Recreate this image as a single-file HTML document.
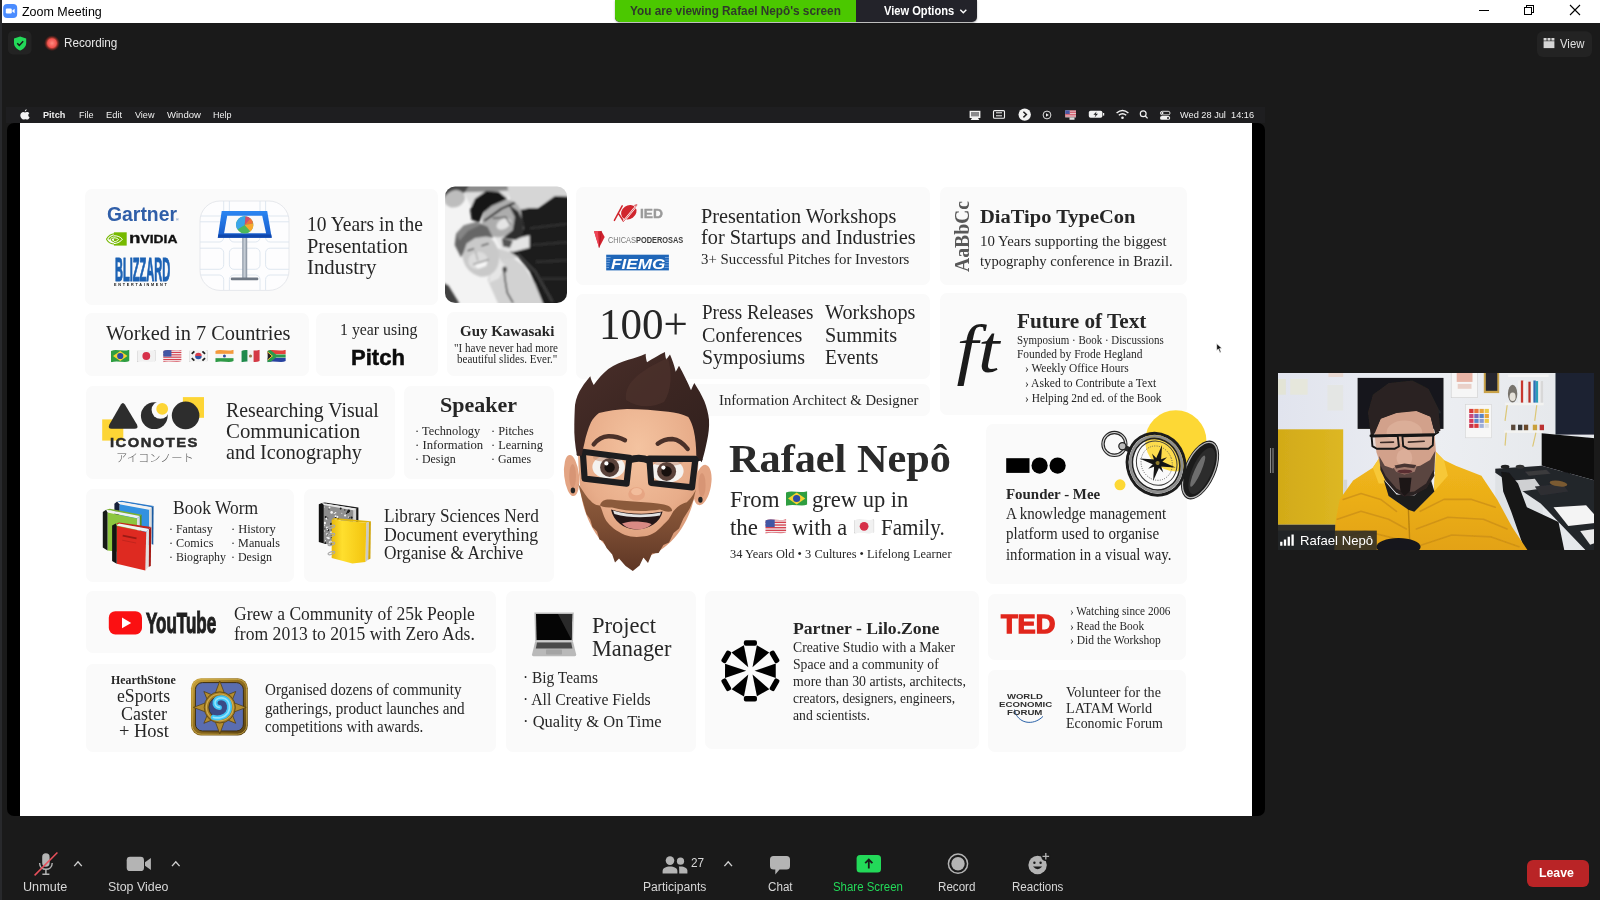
<!DOCTYPE html>
<html lang="en"><head><meta charset="utf-8"><title>Zoom Meeting</title>
<style>
*{margin:0;padding:0;box-sizing:border-box}
html,body{width:1600px;height:900px;overflow:hidden;background:#1a1a1a}
body{position:relative;font-family:"Liberation Sans",sans-serif;color:#fff}
.abs,.t,.card,svg.a{position:absolute}
.t{white-space:pre;line-height:1;transform-origin:0 50%;color:#262626}
.se{font-family:"Liberation Serif",serif}
.sa{font-family:"Liberation Sans",sans-serif}
.jp{font-family:"Liberation Sans","Noto Sans CJK JP",sans-serif}
.card{background:#fafafa;border-radius:7px}
#titlebar{left:2px;top:0;width:1598px;height:23px;background:#fff}
#banner{left:615px;top:0;width:362px;height:22px;border-radius:0 0 5px 5px;overflow:hidden;background:#23232a;box-shadow:0 1px 2px rgba(0,0,0,.35)}
#banner .g{position:absolute;left:0;top:0;width:241px;height:22px;background:#4bc800}
#share{left:7px;top:123px;width:1258px;height:693px;background:#000;border-radius:7px}
#menubar{left:6px;top:107px;width:1259px;height:16px;background:#1e1e20}
#sc{left:0;top:0;width:1600px;height:900px;filter:blur(.4px)}
#slide{left:20px;top:123px;width:1232px;height:693px;background:#fff}
#video{left:1278px;top:373px;width:316px;height:177px;overflow:hidden;background:#dfe2e4}
.btn{background:#232323;border-radius:6px}
#leave{left:1527px;top:860px;width:61.5px;height:26.8px;background:#b92426;border-radius:6px}
#edge{left:0;top:0;width:2px;height:900px;background:#28292c}
</style></head>
<body>
<div class="abs" id="edge"></div>
<div class="abs" id="titlebar"></div>
<div class="abs" id="banner"><div class="g"></div></div>
<div class="abs" id="menubar"></div>
<div class="abs" id="share"></div>
<div class="abs" id="slide"></div>
<div class="abs" id="sc">
<div class="card" style="left:85px;top:189px;width:353.0px;height:116.0px"></div>
<div class="card" style="left:575.5px;top:187px;width:354.5px;height:97.5px"></div>
<div class="card" style="left:940px;top:186.7px;width:246.5px;height:98.6px"></div>
<div class="card" style="left:85px;top:312.5px;width:224.0px;height:63.5px"></div>
<div class="card" style="left:316px;top:312.5px;width:121.5px;height:63.5px"></div>
<div class="card" style="left:446.5px;top:312px;width:120.5px;height:63.5px"></div>
<div class="card" style="left:575.5px;top:293.7px;width:354.5px;height:85.0px"></div>
<div class="card" style="left:940px;top:293.3px;width:246.5px;height:121.4px"></div>
<div class="card" style="left:85.5px;top:385.5px;width:309.0px;height:93.2px"></div>
<div class="card" style="left:403.7px;top:385.5px;width:150.0px;height:93.2px"></div>
<div class="card" style="left:684px;top:383.6px;width:246.0px;height:32.4px"></div>
<div class="card" style="left:986.2px;top:424px;width:201.3px;height:159.5px"></div>
<div class="card" style="left:85.5px;top:488.7px;width:208.2px;height:93.3px"></div>
<div class="card" style="left:303.7px;top:488.7px;width:250.0px;height:93.3px"></div>
<div class="card" style="left:85.5px;top:590.5px;width:410.5px;height:62.0px"></div>
<div class="card" style="left:85.5px;top:663.7px;width:410.5px;height:88.3px"></div>
<div class="card" style="left:505.7px;top:590.5px;width:190.5px;height:161.5px"></div>
<div class="card" style="left:705px;top:590.5px;width:273.7px;height:158.0px"></div>
<div class="card" style="left:987.5px;top:593.7px;width:198.7px;height:66.3px"></div>
<div class="card" style="left:987.5px;top:669.5px;width:198.7px;height:82.5px"></div>
<svg class="a" style="left:0;top:0" width="1600" height="900" viewBox="0 0 1600 900">
<defs>
<filter id="b1" x="-5%" y="-5%" width="110%" height="110%"><feGaussianBlur stdDeviation="1.2"/></filter>
<filter id="b2" x="-5%" y="-5%" width="110%" height="110%"><feGaussianBlur stdDeviation="2.2"/></filter>
<filter id="b05"><feGaussianBlur stdDeviation="0.5"/></filter>
<clipPath id="cpPhoto"><rect x="445" y="186.5" width="122" height="116.5" rx="10"/></clipPath>
<clipPath id="cpKey"><rect x="200" y="201" width="89" height="89" rx="20"/></clipPath>
<linearGradient id="gKeyBlue" x1="0" y1="0" x2="0" y2="1"><stop offset="0" stop-color="#2b86f2"/><stop offset="1" stop-color="#1558c8"/></linearGradient>
<linearGradient id="gStand" x1="0" y1="0" x2="1" y2="0"><stop offset="0" stop-color="#8d98a6"/><stop offset=".5" stop-color="#c9d0d8"/><stop offset="1" stop-color="#7f8a98"/></linearGradient>
<linearGradient id="gGold" x1="0" y1="0" x2="1" y2="1"><stop offset="0" stop-color="#c9a23a"/><stop offset=".5" stop-color="#8c6a1f"/><stop offset="1" stop-color="#5b4210"/></linearGradient>
<radialGradient id="gSwirl"><stop offset="0" stop-color="#8fe6ff"/><stop offset=".6" stop-color="#33a8e6"/><stop offset="1" stop-color="#1b4e9a"/></radialGradient>
<radialGradient id="gSkin" cx=".5" cy=".3" r=".75"><stop offset="0" stop-color="#f4c3a0"/><stop offset=".6" stop-color="#e8ad8a"/><stop offset="1" stop-color="#d2906e"/></radialGradient>
<linearGradient id="gBeard" x1="0" y1="0" x2="0" y2="1"><stop offset="0" stop-color="#93603f"/><stop offset=".5" stop-color="#7c4d33"/><stop offset="1" stop-color="#5e3625"/></linearGradient>
<linearGradient id="gHair" x1="0" y1="0" x2="1" y2="1"><stop offset="0" stop-color="#4a2f2a"/><stop offset=".5" stop-color="#3c2622"/><stop offset="1" stop-color="#30201d"/></linearGradient>
<linearGradient id="gYel" x1="0" y1="0" x2="1" y2="0"><stop offset="0" stop-color="#e9b90c"/><stop offset=".3" stop-color="#ffdf2e"/><stop offset="1" stop-color="#f2c40f"/></linearGradient>
</defs>
<rect x="113.9" y="232.3" width="12.8" height="13.3" fill="#76b900"/>
<path d="M106.4 239.2 C108.6 235.6 111.6 234 114.4 233.8 M108.8 239.4 C110.4 237 112.4 236 114.4 235.8 M106.4 239.2 C108.4 242.6 111.4 244 114.4 244 M111 239.4 C111.8 238.4 113 237.8 114.4 237.8 M111 239.4 C111.8 241 113 241.6 114.4 241.8" fill="none" stroke="#76b900" stroke-width="1.1"/>
<path d="M113.9 235.8 C117.4 235.6 120.6 237 122.4 239.2 C120.8 241.6 117.6 243.4 113.9 243.6 M113.9 237.8 C116 237.8 117.8 238.6 118.6 239.6 C117.6 240.8 116 241.6 113.9 241.8" fill="none" stroke="#fff" stroke-width="1"/>
<rect x="200" y="201" width="89" height="89.4" rx="20" fill="#fdfdfe" stroke="#e6e8ec" stroke-width="1"/>
<g clip-path="url(#cpKey)" stroke="#dbe4ee" stroke-width=".9" fill="none">
<rect x="190" y="190" width="33.7" height="26.0" rx="4.5"/>
<rect x="190" y="221.8" width="33.7" height="20.2" rx="4.5"/>
<rect x="190" y="248.2" width="33.7" height="21.1" rx="4.5"/>
<rect x="190" y="275" width="33.7" height="25.0" rx="4.5"/>
<rect x="229.4" y="190" width="30.6" height="26.0" rx="4.5"/>
<rect x="229.4" y="221.8" width="30.6" height="20.2" rx="4.5"/>
<rect x="229.4" y="248.2" width="30.6" height="21.1" rx="4.5"/>
<rect x="229.4" y="275" width="30.6" height="25.0" rx="4.5"/>
<rect x="265.6" y="190" width="34.4" height="26.0" rx="4.5"/>
<rect x="265.6" y="221.8" width="34.4" height="20.2" rx="4.5"/>
<rect x="265.6" y="248.2" width="34.4" height="21.1" rx="4.5"/>
<rect x="265.6" y="275" width="34.4" height="25.0" rx="4.5"/>
</g>
<rect x="242.2" y="236" width="5" height="43" fill="url(#gStand)"/><rect x="230.8" y="277.6" width="27.5" height="2.6" rx="1" fill="#6f7884"/>
<path d="M221.7 211 H267.2 L271.7 237.7 H217.8Z" fill="url(#gKeyBlue)"/><path d="M218.4 234.4 H271.2 L271.7 237.7 H217.8Z" fill="#0f47ad"/><path d="M227.2 215.8 H262.2 L266.1 233.2 H224.1Z" fill="#f8f9fb"/>
<circle cx="244.7" cy="224.9" r="8.6" fill="#4cb85c"/><path d="M244.7 224.9 L237.4 229.4 A8.6 8.6 0 0 1 245.6 216.3Z" fill="#3aa5e8"/><path d="M244.7 224.9 L245.6 216.3 A8.6 8.6 0 0 1 250.6 218.6Z" fill="#d84a6a"/><path d="M244.7 224.9 L250.6 218.6 A8.6 8.6 0 0 1 253.2 223.6Z" fill="#f2703a"/><path d="M244.7 224.9 L253.2 223.6 A8.6 8.6 0 0 1 250.4 231.4Z" fill="#f7a82e"/>
<g transform="translate(111.0 349.5)"><clipPath id="fcbr111349"><path d="M0 1.4 C5.5 -1 11.5 2.6 18.5 0.2 V11.6 C12.9 14.0 7.0 10.4 0 12.8Z"/></clipPath><g clip-path="url(#fcbr111349)"><rect width="18.5" height="13" fill="#2f9e41"/><path d="M9.25 1.6 L16.5 6.5 L9.25 11.4 L2 6.5Z" fill="#f7d231"/><circle cx="9.25" cy="6.5" r="3.12" fill="#2d4ba5"/></g></g>
<g transform="translate(137.05 349.5)"><clipPath id="fcjp137349"><path d="M0 1.4 C5.5 -1 11.5 2.6 18.5 0.2 V11.6 C12.9 14.0 7.0 10.4 0 12.8Z"/></clipPath><g clip-path="url(#fcjp137349)"><rect width="18.5" height="13" fill="#f1f1f1"/><circle cx="9.25" cy="6.5" r="3.9" fill="#d62f48"/><rect width="18.5" height="13" rx="2" fill="none" stroke="#cfcfcf" stroke-width="1"/></g></g>
<g transform="translate(163.1 349.5)"><clipPath id="fcus163349"><path d="M0 1.4 C5.5 -1 11.5 2.6 18.5 0.2 V11.6 C12.9 14.0 7.0 10.4 0 12.8Z"/></clipPath><g clip-path="url(#fcus163349)"><rect width="18.5" height="13" fill="#f3eeee"/><rect y="0.00" width="18.5" height="1.18" fill="#d5414f"/><rect y="2.36" width="18.5" height="1.18" fill="#d5414f"/><rect y="4.73" width="18.5" height="1.18" fill="#d5414f"/><rect y="7.09" width="18.5" height="1.18" fill="#d5414f"/><rect y="9.45" width="18.5" height="1.18" fill="#d5414f"/><rect y="11.82" width="18.5" height="1.18" fill="#d5414f"/><rect width="8.33" height="7.09" fill="#4256a4"/></g></g>
<g transform="translate(189.15 349.5)"><clipPath id="fckr189349"><path d="M0 1.4 C5.5 -1 11.5 2.6 18.5 0.2 V11.6 C12.9 14.0 7.0 10.4 0 12.8Z"/></clipPath><g clip-path="url(#fckr189349)"><rect width="18.5" height="13" fill="#f3f3f3"/><path d="M5.95 6.5 A3.3 3.3 0 0 1 12.55 6.5Z" fill="#d63a4a"/><path d="M5.95 6.5 A3.3 3.3 0 0 0 12.55 6.5Z" fill="#2f53a4"/><path d="M2.6 4.4 L5.2 1.8 M15.9 4.4 L13.3 1.8 M2.6 8.6 L5.2 11.2 M15.9 8.6 L13.3 11.2" stroke="#222" stroke-width="1.7"/><rect width="18.5" height="13" rx="2" fill="none" stroke="#cfcfcf" stroke-width="1"/></g></g>
<g transform="translate(215.2 349.5)"><clipPath id="fcin215349"><path d="M0 1.4 C5.5 -1 11.5 2.6 18.5 0.2 V11.6 C12.9 14.0 7.0 10.4 0 12.8Z"/></clipPath><g clip-path="url(#fcin215349)"><rect width="18.5" height="13" fill="#f4f4f4"/><rect width="18.5" height="4.33" fill="#f49a3c"/><rect y="8.67" width="18.5" height="4.33" fill="#2f9a47"/><circle cx="9.25" cy="6.5" r="1.5" fill="#334c9c"/></g></g>
<g transform="translate(241.25 349.5)"><clipPath id="fcmx241349"><path d="M0 1.4 C5.5 -1 11.5 2.6 18.5 0.2 V11.6 C12.9 14.0 7.0 10.4 0 12.8Z"/></clipPath><g clip-path="url(#fcmx241349)"><rect width="18.5" height="13" fill="#f3f3f3"/><rect width="6.17" height="13" fill="#1f8a4c"/><rect x="12.33" width="6.17" height="13" fill="#d43a45"/><circle cx="9.25" cy="6.5" r="1.6" fill="#9a7b4a"/></g></g>
<g transform="translate(267.3 349.5)"><clipPath id="fcza267349"><path d="M0 1.4 C5.5 -1 11.5 2.6 18.5 0.2 V11.6 C12.9 14.0 7.0 10.4 0 12.8Z"/></clipPath><g clip-path="url(#fcza267349)"><rect width="18.5" height="13" fill="#f3f3f3"/><rect width="18.5" height="4.68" fill="#e2413b"/><rect y="8.32" width="18.5" height="4.68" fill="#2742a0"/><path d="M0 0 L7.77 6.5 L0 13 " fill="none" stroke="#2c9a4b" stroke-width="3.4"/><path d="M6.66 6.5 H18.5" stroke="#2c9a4b" stroke-width="3.2"/><path d="M0 2.2 L5.00 6.5 L0 10.8Z" fill="#222"/><path d="M0 2.2 L5.00 6.5 L0 10.8" fill="none" stroke="#f4c430" stroke-width="1"/></g></g>
<g transform="translate(786 491)"><clipPath id="fcbr786491"><path d="M0 1.4 C6.4 -1 13.2 2.6 21.3 0.2 V13.6 C14.9 16.0 8.1 12.4 0 14.8Z"/></clipPath><g clip-path="url(#fcbr786491)"><rect width="21.3" height="15" fill="#2f9e41"/><path d="M10.65 1.6 L19.3 7.5 L10.65 13.4 L2 7.5Z" fill="#f7d231"/><circle cx="10.65" cy="7.5" r="3.5999999999999996" fill="#2d4ba5"/></g></g>
<g transform="translate(765.2 519)"><clipPath id="fcus765519"><path d="M0 1.4 C6.3 -1 13.1 2.6 21.1 0.2 V13.3 C14.8 15.7 8.0 12.1 0 14.5Z"/></clipPath><g clip-path="url(#fcus765519)"><rect width="21.1" height="14.7" fill="#f3eeee"/><rect y="0.00" width="21.1" height="1.34" fill="#d5414f"/><rect y="2.67" width="21.1" height="1.34" fill="#d5414f"/><rect y="5.35" width="21.1" height="1.34" fill="#d5414f"/><rect y="8.02" width="21.1" height="1.34" fill="#d5414f"/><rect y="10.69" width="21.1" height="1.34" fill="#d5414f"/><rect y="13.36" width="21.1" height="1.34" fill="#d5414f"/><rect width="9.50" height="8.02" fill="#4256a4"/></g></g>
<g transform="translate(854 519)"><clipPath id="fcjp854519"><path d="M0 1.4 C6.1 -1 12.5 2.6 20.2 0.2 V13.3 C14.1 15.7 7.7 12.1 0 14.5Z"/></clipPath><g clip-path="url(#fcjp854519)"><rect width="20.2" height="14.7" fill="#f1f1f1"/><circle cx="10.1" cy="7.35" r="4.409999999999999" fill="#d62f48"/><rect width="20.2" height="14.7" rx="2" fill="none" stroke="#cfcfcf" stroke-width="1"/></g></g>
<ellipse cx="628.8" cy="212.2" rx="8.2" ry="6.8" fill="#d0252d" transform="rotate(-35 628.8 212.2)"/><path d="M614.4 220.4 L622.2 205.8 M618.2 213.2 L623.4 221" stroke="#d0252d" stroke-width="1.5" stroke-linecap="round"/><path d="M623.8 221.2 L636.6 205.6" stroke="#fff" stroke-width="2"/><path d="M623.8 221.2 L636.6 205.6" stroke="#d0252d" stroke-width=".7"/><path d="M634.4 205.4 L637.2 204.8" stroke="#d0252d" stroke-width="1"/>
<path d="M594 231.3 L601.3 230.9 L604.7 237.1 L599.1 247.8Z" fill="#d2232f"/><path d="M594 231.3 L598 231.1 L599.1 247.8Z" fill="#ee4658"/><path d="M601.3 230.9 L599.1 247.8" stroke="#a3121e" stroke-width=".6"/>
<rect x="606.2" y="254.7" width="62.7" height="15.7" fill="#1f66b8"/><path d="M606.2 257.5 H610.6 M606.2 260 H610.2 M606.2 262.5 H609.8 M606.2 265 H609.4 M606.2 267.5 H609 M665 257.5 H668.9 M665.4 260 H668.9 M665.4 262.5 H668.9 M665 265 H668.9 M664.6 267.5 H668.9" stroke="#8fb6e6" stroke-width=".7"/>
<text transform="translate(969 272) rotate(-90)" font-family="Liberation Serif, serif" font-weight="700" font-size="21.5" fill="#585858" textLength="71" lengthAdjust="spacingAndGlyphs">AaBbCc</text>
<text x="956.5" y="372" font-family="Liberation Serif, serif" font-style="italic" font-size="67" fill="#1b1b1b" textLength="43" lengthAdjust="spacingAndGlyphs">ft</text>
<rect x="182.9" y="397.1" width="21.1" height="20.7" fill="#fdd535"/><rect x="102.2" y="419.4" width="21.1" height="21.2" fill="#fdd535"/>
<path d="M120.9 404.6 Q122.9 401.4 124.9 404.6 L136.9 424.4 Q138.9 428.7 134.6 428.7 H111.6 Q107.4 428.7 109.4 424.4Z" fill="#2d2d2d"/>
<circle cx="154.3" cy="415.7" r="13.4" fill="#2d2d2d"/><circle cx="160.4" cy="410" r="8.8" fill="#fafafa"/><circle cx="162.2" cy="408.9" r="5.9" fill="#fdd535"/>
<circle cx="185.6" cy="415.4" r="13.8" fill="#2d2d2d"/>
<rect x="1006.2" y="458.2" width="23.3" height="14.7" fill="#000"/><circle cx="1039.6" cy="465.6" r="8.1" fill="#000"/><circle cx="1057.6" cy="465.6" r="8.1" fill="#000"/>
<circle cx="1175.8" cy="440.8" r="30.6" fill="#fdd835"/><circle cx="1120" cy="484.8" r="5.5" fill="#fdd835"/>
<g><circle cx="1114.4" cy="443.9" r="11.4" fill="none" stroke="#262626" stroke-width="3.4"/><circle cx="1114.4" cy="443.9" r="11.4" fill="none" stroke="#d8d8d8" stroke-width="1.2"/><path d="M1120.4 445.6 L1131 450.4" stroke="#2a2a2a" stroke-width="5.4"/><circle cx="1122.4" cy="446.2" r="3.6" fill="#bbb" stroke="#222" stroke-width="1.2"/><g transform="rotate(24 1200 470)"><ellipse cx="1200" cy="470" rx="15.6" ry="31.4" fill="#1b1b1b"/><ellipse cx="1200" cy="470" rx="14" ry="29.6" fill="none" stroke="#b5b5b5" stroke-width="1.3"/><ellipse cx="1202" cy="470" rx="9.6" ry="25" fill="#2c2c2c"/><ellipse cx="1198.4" cy="472" rx="3.2" ry="17" fill="#8a8a8a" opacity=".7"/></g><g transform="rotate(-20 1156.1 464.2)"><ellipse cx="1156.1" cy="464.2" rx="28.6" ry="31.2" fill="#fff" fill-opacity=".12" stroke="#1c1c1c" stroke-width="3"/><ellipse cx="1156.1" cy="464.2" rx="25.6" ry="28.2" fill="none" stroke="#8e8e8e" stroke-width="2.6"/><ellipse cx="1156.1" cy="464.2" rx="23.4" ry="26" fill="none" stroke="#222" stroke-width="1.6"/><ellipse cx="1157" cy="463.4" rx="20" ry="22.4" fill="none" stroke="#3a3a3a" stroke-width="1"/><ellipse cx="1157" cy="463.4" rx="15.4" ry="17.4" fill="none" stroke="#555" stroke-width=".8" stroke-dasharray="1 1.3"/></g><g transform="translate(1157.6 463) rotate(14)" fill="#151515"><path transform="rotate(0)" d="M0 -18.6 L2.8 -2.8 L0 0 L-2.8 -2.8Z"/><path transform="rotate(90)" d="M0 -18.6 L2.8 -2.8 L0 0 L-2.8 -2.8Z"/><path transform="rotate(180)" d="M0 -18.6 L2.8 -2.8 L0 0 L-2.8 -2.8Z"/><path transform="rotate(270)" d="M0 -18.6 L2.8 -2.8 L0 0 L-2.8 -2.8Z"/><path transform="rotate(45)" d="M0 -11 L2 -2 L0 0 L-2 -2Z"/><path transform="rotate(135)" d="M0 -11 L2 -2 L0 0 L-2 -2Z"/><path transform="rotate(225)" d="M0 -11 L2 -2 L0 0 L-2 -2Z"/><path transform="rotate(315)" d="M0 -11 L2 -2 L0 0 L-2 -2Z"/><circle r="2" fill="#8d7a2a"/></g></g>
<polygon points="151.5,507.3 153.6,505.9 153.3,544.8 151.5,543.9" fill="#1a5aa0"/><polygon points="117.1,501.5 121.8,500.7 153.6,505.9 151.5,507.5" fill="#2a78c8"/><polygon points="119.4,504.0 149.0,509.6 151.5,507.3 121.8,501.9" fill="#f1f1f1"/><polygon points="149.0,509.8 151.5,507.5 151.5,543.9 149.0,545.3" fill="#dcdcdc"/><polygon points="119.4,504.2 149.0,509.8 149.0,545.3 119.4,539.3" fill="#3391e0"/><polygon points="114.4,503.8 117.1,501.5 119.4,504.2 119.4,539.3 114.4,536.5" fill="#16203a"/><polygon points="139.7,516.0 141.6,514.8 141.6,546.7 139.7,547.6" fill="#5a8f20"/><polygon points="106.1,509.8 109.8,508.8 141.6,514.8 139.7,516.2" fill="#7ab030"/><polygon points="107.5,512.3 137.0,518.3 139.7,516.0 109.8,510.2" fill="#f1f1f1"/><polygon points="137.0,518.5 139.7,516.2 139.7,551.3 137.0,554.0" fill="#dcdcdc"/><polygon points="107.5,512.5 137.0,518.5 136.5,554.0 107.5,550.4" fill="#8dc63f"/><polygon points="102.8,512.1 106.1,509.8 107.5,512.5 107.5,550.4 102.8,547.6" fill="#171a17"/><polygon points="149.0,529.1 151.3,527.3 150.8,566.0 148.5,567.1" fill="#a51914"/><polygon points="115.8,523.4 119.2,522.5 151.3,527.1 149.0,528.9" fill="#c3241c"/><polygon points="116.7,525.6 146.2,531.7 149.0,528.9 119.0,523.4" fill="#f1f1f1"/><polygon points="146.2,531.9 149.0,529.1 148.5,567.1 145.3,570.6" fill="#e0e0e0"/><polygon points="116.7,525.9 146.2,531.9 145.3,570.6 116.7,563.7" fill="#de2a21"/><polygon points="112.1,525.4 115.8,523.6 116.7,525.9 116.7,563.7 112.1,561.0" fill="#141414"/><polyline points="122.7,535.6 136.5,538.4" stroke="#9a1a15" stroke-width="1.6" fill="none"/><polyline points="122.2,540.2 136.1,543.0" stroke="#b0201a" stroke-width=".6" fill="none"/>
<polygon points="356.1,508.4 358.4,507.5 358.4,546.7 356.1,547.6" fill="#151515"/><polygon points="322.0,503.1 324.8,502.4 358.4,507.5 356.1,508.8" fill="#1b1b1b"/><polygon points="323.8,505.0 353.4,510.0 356.1,508.5 326.1,503.8" fill="#e8e8e8"/><polygon points="353.4,510.2 356.1,508.6 356.1,547.6 352.9,549.0" fill="#d0d0d0"/><polygon points="323.8,505.1 353.4,510.2 352.9,549.0 323.8,543.4" fill="#8e8e8e"/><circle cx="341.9" cy="536.9" r="1.1" fill="#f4f4f4"/><circle cx="351.2" cy="538.6" r="1.2" fill="#1c1c1c"/><circle cx="324.7" cy="523.1" r="1.3" fill="#f4f4f4"/><circle cx="342.7" cy="543.2" r="0.6" fill="#1c1c1c"/><circle cx="337.5" cy="517.0" r="0.9" fill="#f4f4f4"/><circle cx="340.5" cy="508.6" r="0.7" fill="#1c1c1c"/><circle cx="332.0" cy="541.8" r="1.1" fill="#f4f4f4"/><circle cx="328.5" cy="536.5" r="0.6" fill="#1c1c1c"/><circle cx="341.8" cy="513.2" r="0.5" fill="#f4f4f4"/><circle cx="349.2" cy="517.7" r="0.7" fill="#1c1c1c"/><circle cx="352.4" cy="543.9" r="0.7" fill="#f4f4f4"/><circle cx="351.8" cy="530.9" r="1.0" fill="#1c1c1c"/><circle cx="329.8" cy="542.3" r="1.1" fill="#f4f4f4"/><circle cx="351.9" cy="544.7" r="0.7" fill="#1c1c1c"/><circle cx="334.3" cy="513.4" r="0.6" fill="#f4f4f4"/><circle cx="325.7" cy="517.0" r="1.0" fill="#1c1c1c"/><circle cx="323.9" cy="531.1" r="0.8" fill="#f4f4f4"/><circle cx="332.8" cy="538.2" r="0.9" fill="#1c1c1c"/><circle cx="333.0" cy="525.2" r="1.1" fill="#f4f4f4"/><circle cx="325.5" cy="542.8" r="0.5" fill="#1c1c1c"/><circle cx="345.6" cy="541.6" r="0.5" fill="#f4f4f4"/><circle cx="346.7" cy="523.3" r="1.0" fill="#1c1c1c"/><circle cx="324.1" cy="507.0" r="0.6" fill="#f4f4f4"/><circle cx="351.6" cy="517.6" r="1.1" fill="#1c1c1c"/><circle cx="350.9" cy="546.3" r="0.8" fill="#f4f4f4"/><circle cx="334.1" cy="527.1" r="1.1" fill="#1c1c1c"/><circle cx="327.0" cy="534.4" r="1.1" fill="#f4f4f4"/><circle cx="348.8" cy="510.9" r="1.3" fill="#1c1c1c"/><circle cx="326.5" cy="518.7" r="1.0" fill="#f4f4f4"/><circle cx="350.5" cy="523.0" r="1.2" fill="#1c1c1c"/><circle cx="339.7" cy="520.0" r="0.8" fill="#f4f4f4"/><circle cx="329.0" cy="509.0" r="0.6" fill="#1c1c1c"/><circle cx="343.9" cy="547.1" r="0.6" fill="#f4f4f4"/><circle cx="325.2" cy="543.2" r="0.9" fill="#1c1c1c"/><circle cx="335.6" cy="516.3" r="1.0" fill="#f4f4f4"/><circle cx="347.8" cy="527.0" r="0.8" fill="#1c1c1c"/><circle cx="325.5" cy="540.5" r="0.5" fill="#f4f4f4"/><circle cx="338.2" cy="539.9" r="0.6" fill="#1c1c1c"/><circle cx="345.1" cy="545.5" r="1.0" fill="#f4f4f4"/><circle cx="346.7" cy="513.3" r="0.8" fill="#1c1c1c"/><circle cx="328.2" cy="538.3" r="0.7" fill="#f4f4f4"/><circle cx="337.0" cy="545.9" r="1.2" fill="#1c1c1c"/><circle cx="352.2" cy="527.7" r="0.9" fill="#f4f4f4"/><circle cx="345.0" cy="527.3" r="0.7" fill="#1c1c1c"/><circle cx="335.6" cy="512.8" r="0.8" fill="#f4f4f4"/><circle cx="352.6" cy="547.3" r="1.0" fill="#1c1c1c"/><circle cx="338.3" cy="520.7" r="0.6" fill="#f4f4f4"/><circle cx="331.8" cy="536.6" r="1.2" fill="#1c1c1c"/><circle cx="334.3" cy="537.2" r="1.1" fill="#f4f4f4"/><circle cx="344.0" cy="534.3" r="1.1" fill="#1c1c1c"/><circle cx="334.4" cy="534.1" r="0.7" fill="#f4f4f4"/><circle cx="338.0" cy="537.3" r="1.1" fill="#1c1c1c"/><circle cx="332.4" cy="543.0" r="1.0" fill="#f4f4f4"/><circle cx="340.7" cy="508.5" r="0.9" fill="#1c1c1c"/><circle cx="331.1" cy="532.2" r="0.9" fill="#f4f4f4"/><circle cx="347.6" cy="534.3" r="1.1" fill="#1c1c1c"/><circle cx="333.9" cy="531.7" r="1.1" fill="#f4f4f4"/><circle cx="347.9" cy="522.9" r="1.2" fill="#1c1c1c"/><circle cx="349.1" cy="536.2" r="1.3" fill="#f4f4f4"/><circle cx="351.6" cy="530.1" r="0.9" fill="#1c1c1c"/><circle cx="328.7" cy="538.1" r="1.2" fill="#f4f4f4"/><circle cx="337.7" cy="534.2" r="1.1" fill="#1c1c1c"/><circle cx="345.1" cy="515.5" r="1.1" fill="#f4f4f4"/><circle cx="340.7" cy="533.8" r="0.8" fill="#1c1c1c"/><circle cx="342.0" cy="538.2" r="1.0" fill="#f4f4f4"/><circle cx="344.8" cy="509.9" r="0.6" fill="#1c1c1c"/><circle cx="336.7" cy="532.4" r="0.7" fill="#f4f4f4"/><circle cx="343.8" cy="533.0" r="0.5" fill="#1c1c1c"/><circle cx="337.5" cy="516.3" r="0.5" fill="#f4f4f4"/><circle cx="327.7" cy="518.0" r="0.6" fill="#1c1c1c"/><circle cx="329.5" cy="507.5" r="0.9" fill="#f4f4f4"/><circle cx="334.9" cy="530.6" r="1.0" fill="#1c1c1c"/><circle cx="330.7" cy="541.0" r="0.5" fill="#f4f4f4"/><circle cx="335.6" cy="517.9" r="0.8" fill="#1c1c1c"/><circle cx="327.2" cy="537.6" r="0.8" fill="#f4f4f4"/><circle cx="324.9" cy="528.8" r="0.6" fill="#1c1c1c"/><circle cx="339.7" cy="521.0" r="1.0" fill="#f4f4f4"/><circle cx="351.7" cy="541.7" r="0.8" fill="#1c1c1c"/><circle cx="347.5" cy="534.1" r="0.8" fill="#f4f4f4"/><circle cx="328.0" cy="528.7" r="1.0" fill="#1c1c1c"/><circle cx="351.7" cy="547.5" r="1.0" fill="#f4f4f4"/><circle cx="334.0" cy="541.3" r="0.5" fill="#1c1c1c"/><circle cx="327.0" cy="527.4" r="1.0" fill="#f4f4f4"/><circle cx="327.9" cy="530.0" r="1.2" fill="#1c1c1c"/><circle cx="334.8" cy="523.7" r="0.7" fill="#f4f4f4"/><circle cx="332.3" cy="544.0" r="0.8" fill="#1c1c1c"/><circle cx="351.8" cy="545.4" r="1.0" fill="#f4f4f4"/><circle cx="331.4" cy="544.1" r="0.9" fill="#1c1c1c"/><circle cx="335.9" cy="519.5" r="1.3" fill="#f4f4f4"/><circle cx="338.1" cy="518.7" r="0.9" fill="#1c1c1c"/><circle cx="327.4" cy="529.6" r="0.9" fill="#f4f4f4"/><circle cx="332.4" cy="536.7" r="1.2" fill="#1c1c1c"/><circle cx="324.2" cy="525.6" r="0.7" fill="#f4f4f4"/><circle cx="351.0" cy="540.2" r="0.7" fill="#1c1c1c"/><circle cx="331.6" cy="512.4" r="1.3" fill="#f4f4f4"/><circle cx="332.4" cy="530.0" r="0.9" fill="#1c1c1c"/><circle cx="342.6" cy="531.7" r="1.1" fill="#f4f4f4"/><circle cx="327.3" cy="534.9" r="0.7" fill="#1c1c1c"/><circle cx="339.3" cy="520.8" r="0.7" fill="#f4f4f4"/><circle cx="339.2" cy="525.7" r="0.8" fill="#1c1c1c"/><circle cx="345.5" cy="531.7" r="0.5" fill="#f4f4f4"/><circle cx="331.2" cy="523.9" r="1.2" fill="#1c1c1c"/><circle cx="349.6" cy="530.8" r="0.5" fill="#f4f4f4"/><circle cx="346.5" cy="525.6" r="1.0" fill="#1c1c1c"/><circle cx="344.4" cy="533.2" r="0.9" fill="#f4f4f4"/><circle cx="350.3" cy="524.7" r="0.8" fill="#1c1c1c"/><circle cx="348.6" cy="517.1" r="0.7" fill="#f4f4f4"/><circle cx="348.0" cy="511.9" r="1.2" fill="#1c1c1c"/><circle cx="344.0" cy="525.4" r="0.7" fill="#f4f4f4"/><circle cx="346.5" cy="544.3" r="0.6" fill="#1c1c1c"/><polygon points="318.8,504.2 322.0,503.1 323.8,505.1 323.8,543.4 318.8,542.0" fill="#111"/><polygon points="368.6,521.8 370.9,521.3 370.4,558.7 368.1,559.8" fill="#cfa40a"/><polygon points="331.7,519.2 334.2,518.1 370.9,521.2 366.5,522.7" fill="#e0b60c"/><polygon points="366.3,522.7 368.7,521.8 368.1,559.8 365.4,562.0" fill="#c9c9c9"/><polygon points="331.7,519.4 366.3,522.7 365.4,562.0 352.4,563.5 331.7,557.9" fill="url(#gYel)"/><ellipse cx="331.4" cy="526.8" rx="3.5" ry="1.3" fill="none" stroke="#a9a9a9" stroke-width="1.1" transform="rotate(-18 331.4 526.8)"/><ellipse cx="331.4" cy="535.1" rx="3.5" ry="1.3" fill="none" stroke="#a9a9a9" stroke-width="1.1" transform="rotate(-18 331.4 535.1)"/><ellipse cx="331.4" cy="543.9" rx="3.5" ry="1.3" fill="none" stroke="#a9a9a9" stroke-width="1.1" transform="rotate(-18 331.4 543.9)"/><ellipse cx="331.4" cy="553.1" rx="3.5" ry="1.3" fill="none" stroke="#a9a9a9" stroke-width="1.1" transform="rotate(-18 331.4 553.1)"/>
<g><path d="M534.4 612.6 H573.8 L573 641.4 H535.2Z" fill="#bdbdbd"/><path d="M536 614 H572.2 L571.6 640 H536.6Z" fill="#050505"/><path d="M558 614 H572.2 L571.6 640Z" fill="#2a2a2a"/><path d="M535.2 641.4 H573 L576.2 654.6 Q576.4 656.2 574.8 656.2 H533.4 Q531.8 656.2 532 654.6Z" fill="#b9b9b9"/><path d="M537 642.6 H571.2 L572.4 648.4 H535.8Z" fill="#4a4a4a"/><rect x="546" y="649.6" width="16" height="5" rx=".8" fill="#a4a4a4"/></g>
<g><rect x="191" y="678.2" width="56.8" height="57.2" rx="10" fill="url(#gGold)"/><rect x="192.2" y="679.4" width="54.4" height="54.8" rx="9" fill="none" stroke="#d9b851" stroke-width="1" opacity=".7"/><rect x="195.4" y="682.6" width="48" height="48.4" rx="7" fill="#5a6db0" stroke="#3f2f0e" stroke-width="1"/><g transform="translate(219.8 707.4)" fill="#b48d30" stroke="#4d390f" stroke-width=".7"><path transform="rotate(0)" d="M0 -26.4 L5.4 -12 H-5.4Z"/><path transform="rotate(90)" d="M0 -26.4 L5.4 -12 H-5.4Z"/><path transform="rotate(180)" d="M0 -26.4 L5.4 -12 H-5.4Z"/><path transform="rotate(270)" d="M0 -26.4 L5.4 -12 H-5.4Z"/><path transform="rotate(45)" d="M0 -22.5 L4.4 -12 H-4.4Z"/><path transform="rotate(135)" d="M0 -22.5 L4.4 -12 H-4.4Z"/><path transform="rotate(225)" d="M0 -22.5 L4.4 -12 H-4.4Z"/><path transform="rotate(315)" d="M0 -22.5 L4.4 -12 H-4.4Z"/><circle r="15.6" fill="#a27c26"/><circle r="13.4" fill="none" stroke="#d2ae4c" stroke-width="1.2"/><circle r="11" fill="#3a4a86" stroke="#3a2c0c"/></g><path d="M219.4 707.4 C216.7 707.4 214.5 705.1 215.1 701.9 C215.9 698.3 220.6 696.7 225.2 698.8 C230.0 701.2 230.8 708.6 227.7 713.2 C224.6 717.5 218.2 718.7 213.4 717.4" fill="none" stroke="#3fc4f6" stroke-width="5" stroke-linecap="round"/><path d="M219.4 707.4 C216.7 707.4 214.5 705.1 215.1 701.9 C215.9 698.3 220.6 696.7 225.2 698.8 C230.0 701.2 230.8 708.6 227.7 713.2 C224.6 717.5 218.2 718.7 213.4 717.4" fill="none" stroke="#a7ecff" stroke-width="1.6" stroke-linecap="round" opacity=".8"/></g>
<rect x="108.8" y="611.2" width="33.2" height="23.3" rx="6.5" fill="#fb1012"/><path d="M122 617.6 L131.2 622.9 L122 628.2Z" fill="#fff"/>
<g transform="translate(750.4 670.8) scale(1.04)" fill="#000">
<g transform="rotate(0)"><rect x="-6.3" y="-29.4" width="12.6" height="5.2" rx="1.8"/><path d="M6.2 -24.6 L18.1 -17.7 L2 -3.5Z"/></g>
<g transform="rotate(60)"><rect x="-6.3" y="-29.4" width="12.6" height="5.2" rx="1.8"/><path d="M6.2 -24.6 L18.1 -17.7 L2 -3.5Z"/></g>
<g transform="rotate(120)"><rect x="-6.3" y="-29.4" width="12.6" height="5.2" rx="1.8"/><path d="M6.2 -24.6 L18.1 -17.7 L2 -3.5Z"/></g>
<g transform="rotate(180)"><rect x="-6.3" y="-29.4" width="12.6" height="5.2" rx="1.8"/><path d="M6.2 -24.6 L18.1 -17.7 L2 -3.5Z"/></g>
<g transform="rotate(240)"><rect x="-6.3" y="-29.4" width="12.6" height="5.2" rx="1.8"/><path d="M6.2 -24.6 L18.1 -17.7 L2 -3.5Z"/></g>
<g transform="rotate(300)"><rect x="-6.3" y="-29.4" width="12.6" height="5.2" rx="1.8"/><path d="M6.2 -24.6 L18.1 -17.7 L2 -3.5Z"/></g>
</g>
<path d="M1014.5 709.6 C1017 723.5 1033 726.5 1043 716.4" fill="none" stroke="#2a62a8" stroke-width="1"/>
<g clip-path="url(#cpPhoto)"><rect x="444" y="186" width="124" height="118" fill="#f3f3f3"/><g filter="url(#b1)"><polygon points="442.8,184.8 512.8,184.8 510.0,191.8 465.2,192.5 461.0,190.4 444.2,198.8" fill="#8c8c8c" /><polygon points="442.8,184.8 469.4,184.8 464.5,192.9 444.2,195.3" fill="#474747" /><ellipse cx="454.7" cy="198.8" rx="10.5" ry="8.4" fill="#bdbdbd" transform="rotate(-20 454.7 198.8)" /><polygon points="463.8,192.5 510.0,190.4 507.2,200.2 472.2,208.6" fill="#dedede" /><polygon points="507.2,184.8 570.2,184.8 570.2,200.2 554.8,196.0 538.0,207.2 524.0,214.2 510.0,200.2" fill="#d6d6d6" /><polygon points="442.8,282.8 448.4,285.6 459.6,303.8 442.8,303.8" fill="#3f3f3f" /><polygon points="519.8,210.0 529.6,207.9 538.0,207.9 554.8,196.0 570.2,196.7 570.2,305.2 543.6,305.2 529.6,271.6 518.4,257.6 510.0,252.0 515.6,240.8 524.0,228.2" fill="#1c1c1c" /><polyline points="531.0,228.2 566.0,224.0" fill="none" stroke="#333" stroke-width="2.2" stroke-linecap="round" stroke-linejoin="round" /><polyline points="532.4,245.0 566.7,242.2" fill="none" stroke="#333" stroke-width="2.2" stroke-linecap="round" stroke-linejoin="round" /><polyline points="536.6,261.8 566.7,260.4" fill="none" stroke="#333" stroke-width="2.2" stroke-linecap="round" stroke-linejoin="round" /><polyline points="542.2,278.6 566.7,278.6" fill="none" stroke="#333" stroke-width="2.2" stroke-linecap="round" stroke-linejoin="round" /><polyline points="518.4,254.8 535.2,271.6 552.0,301.0" fill="none" stroke="#3a3a3a" stroke-width="3" stroke-linecap="round" stroke-linejoin="round" /><polygon points="487.6,280.0 490.4,271.6 500.2,260.4 512.8,257.6 524.0,266.0 535.2,284.2 543.6,305.2 498.8,305.2" fill="#d2d2d2" /><polygon points="490.4,271.6 500.2,260.4 505.8,266.0 498.8,278.6 489.0,282.8" fill="#e6e6e6" /><polygon points="491.8,231.0 505.8,240.8 518.4,238.0 529.6,235.2 529.6,247.8 512.8,252.0 501.6,249.2" fill="#e4e4e4" /><polygon points="501.6,238.0 512.8,240.8 510.0,247.8 503.0,246.4" fill="#555" /><polygon points="496.0,247.8 510.0,252.0 518.4,257.6 500.2,260.4" fill="#cfcfcf" /><ellipse cx="501.6" cy="218.4" rx="21.0" ry="17.5" fill="#adadad" transform="rotate(-38 501.6 218.4)" /><ellipse cx="503.7" cy="224.0" rx="7.7" ry="5.0" fill="#e4e4e4" transform="rotate(-30 503.7 224.0)" /><polygon points="508.6,204.4 518.4,211.4 524.0,224.0 522.6,236.6 515.6,240.1 503.0,238.0 512.8,230.3 514.9,217.0" fill="#2e2e2e" /><polygon points="471.5,219.8 470.1,210.0 475.0,198.8 486.2,191.1 498.8,191.8 507.2,198.8 501.6,201.6 491.8,205.8 483.4,212.8 479.2,222.6" fill="#161616" /><polyline points="484.8,220.5 501.6,208.6 514.2,203.0" fill="none" stroke="#222" stroke-width="2" stroke-linecap="round" stroke-linejoin="round" /><polyline points="493.2,218.4 505.8,217.0 510.0,224.0" fill="none" stroke="#3a3a3a" stroke-width="1.2" stroke-linecap="round" stroke-linejoin="round" /><ellipse cx="480.6" cy="254.8" rx="18.2" ry="22.4" fill="#c9c9c9" transform="rotate(-18 480.6 254.8)" /><ellipse cx="477.8" cy="260.4" rx="9.8" ry="8.4" fill="#dcdcdc" transform="rotate(-18 477.8 260.4)" /><polygon points="461.0,257.6 454.7,245.0 456.1,233.8 463.8,225.4 476.4,221.9 487.6,226.8 493.2,238.0 486.2,236.6 475.0,238.0 466.6,243.6 463.8,252.0" fill="#666" /><polygon points="456.1,233.8 463.8,225.4 476.4,221.9 482.0,224.0 468.0,231.0 459.6,240.8" fill="#858585" /><polyline points="468.0,250.6 473.6,248.9" fill="none" stroke="#3a3a3a" stroke-width="1.4" stroke-linecap="round" stroke-linejoin="round" /><polyline points="482.0,245.7 488.3,243.6" fill="none" stroke="#3a3a3a" stroke-width="1.4" stroke-linecap="round" stroke-linejoin="round" /><polygon points="474.3,264.6 487.6,260.4 486.2,266.0 477.8,268.5" fill="#f6f6f6" /><polyline points="473.6,264.3 488.3,259.8" fill="none" stroke="#555" stroke-width="0.9" stroke-linecap="round" stroke-linejoin="round" /><polyline points="475.7,252.0 477.8,260.4" fill="none" stroke="#999" stroke-width="1" stroke-linecap="round" stroke-linejoin="round" /><polyline points="503.7,267.4 505.1,280.0 507.2,292.6 512.8,302.4" fill="none" stroke="#3a3a3a" stroke-width="1.5" stroke-linecap="round" stroke-linejoin="round" /><ellipse cx="504.7" cy="269.5" rx="2.2" ry="3.1" fill="#444" transform="rotate(0 504.7 269.5)" /></g></g>
<g><ellipse cx="571.6" cy="475.6" rx="7.4" ry="20.6" fill="#e3a483" transform="rotate(-6 571.6 475.6)"/><ellipse cx="702.4" cy="485" rx="8.6" ry="20.4" fill="#e3a483" transform="rotate(10 702.4 485)"/><ellipse cx="572.6" cy="476" rx="3.4" ry="12" fill="#cf8c6c" opacity=".6"/><ellipse cx="702" cy="485" rx="3.6" ry="12" fill="#cf8c6c" opacity=".6"/><ellipse cx="572.9" cy="490.4" rx="2.2" ry="2.8" fill="#222"/><ellipse cx="700.4" cy="499.8" rx="2.2" ry="3" fill="#222"/><path d="M580 405 C600 398 680 398 696 408 C700 440 700 480 692 506 C684 532 664 556 634 560 C606 556 588 528 582 500 C577 470 577 430 580 405Z" fill="url(#gSkin)"/><path d="M578.4 484 C580 492 583 502 586.4 514 L590.2 519.6 L592.4 527 L597 531.4 L599.4 539.6 L603 541 L606.6 548 L612.2 554.6 L615 562.4 L619 558.6 L625.6 566 L632.8 571 L639.6 565.4 L643.4 557.6 L648 563 L652 553.6 L658.6 553 L663.4 545 L669 542.6 L673.6 533 L679 528.6 L683.4 518.6 L689.4 509 L693.4 500 L696 489 C694 494 690 499.6 686.8 502.2 C680 504 676 508 673.2 511.6 C670 518 667 522 663.8 524.2 C656 533 650 536.2 642 536.6 C636 537.4 630 536.8 625 535 C616 531 610 526 606.4 521 C603 515.6 602 509 600 505.4 C596 505.6 592 503 590.4 500.6 C586.6 497 584 492.6 578.4 484Z" fill="url(#gBeard)"/><path d="M611 509.4 C628 514.6 648 514.6 662.6 511.6 C660 523 648 530 636 529.4 C623 528.6 613.6 521 611 509.4Z" fill="#241617"/><path d="M622 523.6 C629 520.6 645 521 651.6 524.2 C647 528.4 642 529.6 636 529.4 C630 529 625.6 527.4 622 523.6Z" fill="#d98a84"/><path d="M613 510.6 C628 515.4 647 515.4 661 512.6 L660 515.6 C646 518 628 518 614.4 514Z" fill="#e2e2e2"/><path d="M600 505.4 C601 500.4 606 499 611 499.6 C626 501.6 648 502 664 504.4 C669 505.4 672.4 508 672 511 C668 512.6 664 511 660 509.6 C646 512 626 511.6 612 507.6 C608 507.4 603.6 507.6 600 505.4Z" fill="#8b5a3b"/><ellipse cx="636.6" cy="494" rx="8.4" ry="6.8" fill="#e6a583"/><ellipse cx="636.6" cy="491.6" rx="5.4" ry="3.6" fill="#f2bd9c"/><ellipse cx="608.6" cy="467" rx="16.2" ry="11.8" fill="#f4f2ef"/><ellipse cx="608.6" cy="457.6" rx="15.6" ry="4.6" fill="#c89479" opacity=".6"/><circle cx="609.6" cy="467.4" r="9.5" fill="#5a423a"/><circle cx="609.6" cy="467.4" r="5.2" fill="#17100e"/><circle cx="606.4" cy="463.4" r="2.1" fill="#fff"/><ellipse cx="667.4" cy="471" rx="16.2" ry="11.8" fill="#f4f2ef"/><ellipse cx="667.4" cy="461.6" rx="15.6" ry="4.6" fill="#c89479" opacity=".6"/><circle cx="666.6" cy="471.4" r="9.5" fill="#5a423a"/><circle cx="666.6" cy="471.4" r="5.2" fill="#17100e"/><circle cx="663.4" cy="467.6" r="2.1" fill="#fff"/><g fill="none" stroke="#1d1d1f" stroke-width="6.2" stroke-linejoin="round"><path d="M582.8 451.8 L629.4 457.8 L626.6 483.6 L584.6 478.6Z"/><path d="M649.4 458.6 L695.4 458.8 L692 487.4 L651.2 483Z"/><path d="M629 460 C636 457.6 643 457.6 649.6 460.6" stroke-width="7"/></g><path d="M582.8 454 L577 453 M695.4 460 L702 458" stroke="#1d1d1f" stroke-width="4"/><path d="M577 455.7 C575 445 574 435 574.3 425 C574.4 418 574.6 411 575 405 C576 398 578.6 392 581.7 387.7 C584.6 383 587.6 379.6 590.3 376.3 C591 379.6 592.4 382.6 593.7 385 C598 378.6 603 373.4 608.3 369 C614.6 364.6 621.4 361.6 628.3 359.7 C634.6 358 640.6 356 645.7 353.7 C645.6 356.6 646.2 359.6 647 362.3 C652.6 358.6 659 355 665 352 C665 354.6 665.6 357.4 666.3 359.7 C667.4 358 668.8 356.2 670 354.6 C672.4 360 674.4 366 675.7 371.7 C676.8 369.6 678 367.6 679 365.7 C683.4 373.6 687.6 382 691 390.3 C692 387.8 693.2 385.4 694.3 383 C698 388.8 701.6 394.8 704.3 401 C706.6 407 708.4 413.4 709 419.7 C709.4 427 708.6 434 707 441 C705.6 448 703.8 455.4 701.7 462.3 L696.3 455.7 C696.2 447 695.6 438.6 693.7 430.3 C692.6 425.4 690.8 421 688.3 417 C682 414 675.4 412.4 668.3 411.7 C654.6 410.2 640.8 409.2 627 409 C617.6 409.4 608.2 410.6 599 413 C595.6 415.4 593 418.6 591 422.3 C588 429 585.8 436.2 584.3 443.7 C583.2 447.6 582.4 451.6 581.7 455.7Z" fill="url(#gHair)"/><path d="M626 400 C624 385 636 372 668 358 C672 372 672 390 664 402 C652 408 638 408 626 400Z" fill="#4d322c" opacity=".7"/><path d="M593.7 444.3 C598 439 603 436.6 608.3 436.3 C614 436.2 620 437.6 625 440.3" fill="none" stroke="#4b3129" stroke-width="4.4" stroke-linecap="round"/><path d="M657.7 443.7 C662 440.4 667 439 672.3 439 C678 439.6 683.6 443.6 687.7 449" fill="none" stroke="#4b3129" stroke-width="4.4" stroke-linecap="round"/></g>
<path d="M1216.7 343.6 V350.4 L1218.4 349 L1219.9 352.8 L1221.1 352.3 L1219.6 348.6 L1222 348.4Z" fill="#111" stroke="#fff" stroke-width=".6"/>
</svg>
<span class="t se" style="left:307.3px;top:214px;font-size:21.26px;transform:scaleX(0.917);">10 Years in the</span>
<span class="t se" style="left:307.3px;top:236px;font-size:21.26px;transform:scaleX(0.961);">Presentation</span>
<span class="t se" style="left:307.3px;top:257px;font-size:21.26px;transform:scaleX(0.980);">Industry</span>
<span class="t se" style="left:701.0px;top:206px;font-size:21.11px;transform:scaleX(0.959);">Presentation Workshops</span>
<span class="t se" style="left:701.0px;top:227px;font-size:21.11px;transform:scaleX(0.961);">for Startups and Industries</span>
<span class="t se" style="left:701.0px;top:251px;font-size:15.44px;transform:scaleX(0.960);">3+ Successful Pitches for Investors</span>
<span class="t se" style="left:980.0px;top:207px;font-size:19.71px;transform:scaleX(1.041);font-weight:700;">DiaTipo TypeCon</span>
<span class="t se" style="left:980.0px;top:233px;font-size:15.35px;transform:scaleX(0.967);">10 Years supporting the biggest</span>
<span class="t se" style="left:980.0px;top:253px;font-size:15.35px;transform:scaleX(0.954);">typography conference in Brazil.</span>
<span class="t se" style="left:106.3px;top:323px;font-size:21.21px;transform:scaleX(0.960);">Worked in 7 Countries</span>
<span class="t se" style="left:340.3px;top:322px;font-size:16.50px;transform:scaleX(0.960);">1 year using</span>
<span class="t se" style="left:459.6px;top:324px;font-size:14.38px;transform:scaleX(1.040);font-weight:700;">Guy Kawasaki</span>
<span class="t se" style="left:453.8px;top:343px;font-size:11.56px;transform:scaleX(0.964);">"I have never had more</span>
<span class="t se" style="left:457.3px;top:354px;font-size:11.56px;transform:scaleX(0.958);">beautiful slides. Ever."</span>
<span class="t se" style="left:599.3px;top:302px;font-size:44.87px;transform:scaleX(0.960);">100+</span>
<span class="t se" style="left:702.3px;top:302px;font-size:20.83px;transform:scaleX(0.913);">Press Releases</span>
<span class="t se" style="left:702.3px;top:325px;font-size:20.83px;transform:scaleX(0.965);">Conferences</span>
<span class="t se" style="left:702.3px;top:347px;font-size:20.83px;transform:scaleX(0.956);">Symposiums</span>
<span class="t se" style="left:824.8px;top:302px;font-size:20.83px;transform:scaleX(0.970);">Workshops</span>
<span class="t se" style="left:824.8px;top:325px;font-size:20.83px;transform:scaleX(0.973);">Summits</span>
<span class="t se" style="left:824.8px;top:347px;font-size:20.83px;transform:scaleX(0.942);">Events</span>
<span class="t se" style="left:1017.3px;top:311px;font-size:20.42px;transform:scaleX(1.041);font-weight:700;">Future of Text</span>
<span class="t se" style="left:1017.3px;top:335px;font-size:11.91px;transform:scaleX(0.920);">Symposium · Book · Discussions</span>
<span class="t se" style="left:1017.3px;top:349px;font-size:11.91px;transform:scaleX(0.960);">Founded by Frode Hegland</span>
<span class="t se" style="left:1024.8px;top:363px;font-size:11.91px;transform:scaleX(0.961);">› Weekly Office Hours</span>
<span class="t se" style="left:1024.8px;top:378px;font-size:11.91px;transform:scaleX(0.973);">› Asked to Contribute a Text</span>
<span class="t se" style="left:1024.8px;top:393px;font-size:11.91px;transform:scaleX(0.958);">› Helping 2nd ed. of the Book</span>
<span class="t se" style="left:226.0px;top:400px;font-size:20.98px;transform:scaleX(0.943);">Researching Visual</span>
<span class="t se" style="left:226.0px;top:421px;font-size:20.98px;transform:scaleX(0.993);">Communication</span>
<span class="t se" style="left:226.0px;top:442px;font-size:20.98px;transform:scaleX(0.960);">and Iconography</span>
<span class="t se" style="left:439.8px;top:395px;font-size:21.18px;transform:scaleX(1.040);font-weight:700;">Speaker</span>
<span class="t se" style="left:415.0px;top:425px;font-size:12.85px;transform:scaleX(0.963);">· Technology</span>
<span class="t se" style="left:415.0px;top:439px;font-size:12.85px;transform:scaleX(0.991);">· Information</span>
<span class="t se" style="left:415.0px;top:453px;font-size:12.85px;transform:scaleX(0.928);">· Design</span>
<span class="t se" style="left:490.5px;top:425px;font-size:12.85px;transform:scaleX(0.958);">· Pitches</span>
<span class="t se" style="left:490.5px;top:439px;font-size:12.85px;transform:scaleX(0.964);">· Learning</span>
<span class="t se" style="left:490.5px;top:453px;font-size:12.85px;transform:scaleX(0.931);">· Games</span>
<span class="t se" style="left:719.3px;top:392px;font-size:15.30px;transform:scaleX(0.960);">Information Architect &amp; Designer</span>
<span class="t se" style="left:729.1px;top:440px;font-size:39.51px;transform:scaleX(1.070);color:#2a2a2a;font-weight:700;">Rafael Nepô</span>
<span class="t se" style="left:729.5px;top:488px;font-size:23.48px;transform:scaleX(0.975);">From</span>
<span class="t se" style="left:812.1px;top:488px;font-size:23.48px;transform:scaleX(0.960);">grew up in</span>
<span class="t se" style="left:729.9px;top:516px;font-size:23.48px;transform:scaleX(0.977);">the</span>
<span class="t se" style="left:791.9px;top:516px;font-size:23.48px;transform:scaleX(0.951);">with a</span>
<span class="t se" style="left:880.7px;top:516px;font-size:23.48px;transform:scaleX(0.899);">Family.</span>
<span class="t se" style="left:729.5px;top:548px;font-size:12.94px;transform:scaleX(0.960);">34 Years Old • 3 Cultures • Lifelong Learner</span>
<span class="t se" style="left:1006.0px;top:487px;font-size:14.35px;transform:scaleX(1.040);font-weight:700;">Founder - Mee</span>
<span class="t se" style="left:1006.0px;top:506px;font-size:15.65px;transform:scaleX(0.960);">A knowledge management</span>
<span class="t se" style="left:1006.0px;top:526px;font-size:15.65px;transform:scaleX(0.962);">platform used to organise</span>
<span class="t se" style="left:1006.0px;top:547px;font-size:15.65px;transform:scaleX(0.946);">information in a visual way.</span>
<span class="t se" style="left:172.5px;top:499px;font-size:18.21px;transform:scaleX(0.961);">Book Worm</span>
<span class="t se" style="left:168.8px;top:523px;font-size:12.56px;transform:scaleX(0.940);">· Fantasy</span>
<span class="t se" style="left:168.8px;top:537px;font-size:12.56px;transform:scaleX(0.972);">· Comics</span>
<span class="t se" style="left:168.8px;top:551px;font-size:12.56px;transform:scaleX(0.944);">· Biography</span>
<span class="t se" style="left:231.0px;top:523px;font-size:12.56px;transform:scaleX(0.994);">· History</span>
<span class="t se" style="left:231.0px;top:537px;font-size:12.56px;transform:scaleX(0.968);">· Manuals</span>
<span class="t se" style="left:231.0px;top:551px;font-size:12.56px;transform:scaleX(0.954);">· Design</span>
<span class="t se" style="left:383.5px;top:507px;font-size:18.05px;transform:scaleX(0.954);">Library Sciences Nerd</span>
<span class="t se" style="left:383.5px;top:526px;font-size:18.05px;transform:scaleX(0.984);">Document everything</span>
<span class="t se" style="left:383.5px;top:544px;font-size:18.05px;transform:scaleX(0.961);">Organise &amp; Archive</span>
<span class="t se" style="left:234.3px;top:605px;font-size:18.29px;transform:scaleX(0.958);">Grew a Community of 25k People</span>
<span class="t se" style="left:234.3px;top:625px;font-size:18.29px;transform:scaleX(0.962);">from 2013 to 2015 with Zero Ads.</span>
<span class="t se" style="left:111.0px;top:675px;font-size:11.43px;transform:scaleX(1.040);font-weight:700;">HearthStone</span>
<span class="t se" style="left:116.8px;top:687px;font-size:18.72px;transform:scaleX(0.946);">eSports</span>
<span class="t se" style="left:120.5px;top:705px;font-size:18.72px;transform:scaleX(0.961);">Caster</span>
<span class="t se" style="left:118.8px;top:722px;font-size:18.72px;transform:scaleX(0.987);">+ Host</span>
<span class="t se" style="left:264.8px;top:682px;font-size:15.73px;transform:scaleX(0.961);">Organised dozens of community</span>
<span class="t se" style="left:264.8px;top:701px;font-size:15.73px;transform:scaleX(0.965);">gatherings, product launches and</span>
<span class="t se" style="left:264.8px;top:719px;font-size:15.73px;transform:scaleX(0.957);">competitions with awards.</span>
<span class="t se" style="left:591.8px;top:614px;font-size:23.39px;transform:scaleX(0.965);">Project</span>
<span class="t se" style="left:591.8px;top:637px;font-size:23.39px;transform:scaleX(0.956);">Manager</span>
<span class="t se" style="left:522.5px;top:670px;font-size:16.35px;transform:scaleX(0.944);">· Big Teams</span>
<span class="t se" style="left:522.5px;top:692px;font-size:16.35px;transform:scaleX(0.960);">· All Creative Fields</span>
<span class="t se" style="left:522.5px;top:714px;font-size:16.35px;transform:scaleX(1.011);">· Quality &amp; On Time</span>
<span class="t se" style="left:793.3px;top:620px;font-size:16.99px;transform:scaleX(1.040);font-weight:700;">Partner - Lilo.Zone</span>
<span class="t se" style="left:793.3px;top:640px;font-size:14.26px;transform:scaleX(0.961);">Creative Studio with a Maker</span>
<span class="t se" style="left:793.3px;top:657px;font-size:14.26px;transform:scaleX(0.959);">Space and a community of</span>
<span class="t se" style="left:793.3px;top:674px;font-size:14.26px;transform:scaleX(0.971);">more than 30 artists, architects,</span>
<span class="t se" style="left:793.3px;top:691px;font-size:14.26px;transform:scaleX(0.946);">creators, designers, engineers,</span>
<span class="t se" style="left:793.3px;top:708px;font-size:14.26px;transform:scaleX(0.961);">and scientists.</span>
<span class="t se" style="left:1069.8px;top:606px;font-size:11.83px;transform:scaleX(0.951);">› Watching since 2006</span>
<span class="t se" style="left:1069.8px;top:621px;font-size:11.83px;transform:scaleX(0.960);">› Read the Book</span>
<span class="t se" style="left:1069.8px;top:635px;font-size:11.83px;transform:scaleX(0.976);">› Did the Workshop</span>
<span class="t se" style="left:1066.3px;top:685px;font-size:14.63px;transform:scaleX(0.960);">Volunteer for the</span>
<span class="t se" style="left:1066.3px;top:701px;font-size:14.63px;transform:scaleX(0.970);">LATAM World</span>
<span class="t se" style="left:1066.3px;top:716px;font-size:14.63px;transform:scaleX(0.950);">Economic Forum</span>
<span class="t sa" style="left:107.3px;top:204px;font-size:20.50px;transform:scaleX(0.945);color:#2f5ea8;font-weight:700;">Gartner</span>
<span class="t sa" style="left:176.1px;top:219px;font-size:3.40px;transform:scaleX(1.120);color:#2f5ea8;">®</span>
<span class="t sa" style="left:129.2px;top:234px;font-size:10.80px;transform:scaleX(1.282);color:#111;font-weight:700;-webkit-text-stroke:.3px #111;"><span style="font-size:1.36em;line-height:0">n</span>VIDIA</span>
<span class="t sa" style="left:114.8px;top:254px;font-size:32.60px;transform:scaleX(0.339);color:#1c62b4;font-weight:700;-webkit-text-stroke:1.2px #1c62b4;">BLIZZARD</span>
<span class="t sa" style="left:114.3px;top:285px;font-size:2.60px;transform:scaleX(1.452);color:#111;font-weight:700;letter-spacing:1.2px;">ENTERTAINMENT</span>
<span class="t sa" style="left:640.1px;top:207px;font-size:13.10px;transform:scaleX(1.054);color:#9a9a9a;font-weight:700;-webkit-text-stroke:.4px #9a9a9a;">IED</span>
<span class="t sa" style="left:607.6px;top:236px;font-size:8.70px;transform:scaleX(0.852);color:#3c3c3c;"><span style="color:#777">CHICAS</span><b>PODEROSAS</b></span>
<span class="t sa" style="left:610.6px;top:256px;font-size:15.50px;transform:scaleX(1.108);color:#fff;font-weight:700;font-style:italic;">FIEMG</span>
<span class="t sa" style="left:351.3px;top:347px;font-size:22.60px;transform:scaleX(0.976);color:#0c0c0c;font-weight:700;-webkit-text-stroke:.5px #0c0c0c;">Pitch</span>
<span class="t sa" style="left:110.4px;top:436px;font-size:13.60px;transform:scaleX(1.086);color:#2b2b2b;font-weight:700;-webkit-text-stroke:.5px #2b2b2b;letter-spacing:1.35px;">ICONOTES</span>
<span class="t jp" style="left:116.3px;top:453px;font-size:10.90px;transform:scaleX(1.035);color:#555;font-weight:300;">アイコンノート</span>
<span class="t sa" style="left:145.7px;top:608px;font-size:29.60px;transform:scaleX(0.574);color:#1f1f1f;font-weight:700;-webkit-text-stroke:1.2px #1f1f1f;">YouTube</span>
<span class="t sa" style="left:1001.3px;top:611px;font-size:26.00px;transform:scaleX(1.046);color:#e1261c;font-weight:700;-webkit-text-stroke:1.3px #e1261c;">TED</span>
<span class="t sa" style="left:1007.3px;top:693px;font-size:7.70px;transform:scaleX(1.236);color:#2e2e2e;font-weight:700;">WORLD</span>
<span class="t sa" style="left:998.8px;top:701px;font-size:7.70px;transform:scaleX(1.256);color:#2e2e2e;font-weight:700;">ECONOMIC</span>
<span class="t sa" style="left:1007.3px;top:709px;font-size:7.70px;transform:scaleX(1.256);color:#2e2e2e;font-weight:700;">FORUM</span>
</div>
<div class="abs" id="video"></div>
<svg class="a" style="left:1278px;top:373px" width="316" height="177" viewBox="1278 373 316 177">
<defs><filter id="wb" filterUnits="userSpaceOnUse" x="1268" y="363" width="336" height="197"><feGaussianBlur stdDeviation="0.75"/></filter><linearGradient id="gWall" x1="0" y1="0" x2="1" y2="0"><stop offset="0" stop-color="#e1e4ee"/><stop offset=".5" stop-color="#eceef2"/><stop offset="1" stop-color="#e4e7ea"/></linearGradient><linearGradient id="gJ" x1="0" y1="0" x2="0" y2="1"><stop offset="0" stop-color="#f2b91c"/><stop offset="1" stop-color="#e3a214"/></linearGradient><linearGradient id="gPanel" x1="0" y1="0" x2="1" y2="0"><stop offset="0" stop-color="#d2aa18"/><stop offset="1" stop-color="#ddb722"/></linearGradient></defs>
<rect x="1278" y="373" width="316" height="177" fill="url(#gWall)"/><g filter="url(#wb)">
<rect x="1278.0" y="378.9" width="7.9" height="15.8" fill="#e3e4d6" />
<rect x="1290.2" y="378.9" width="17.4" height="15.8" fill="#e6e7dc" />
<rect x="1327.4" y="384.9" width="15.8" height="25.7" fill="#e4e6e4" />
<rect x="1328.4" y="373.0" width="14.8" height="4.0" fill="#e9d9d2" />
<rect x="1277.0" y="429.3" width="66.2" height="95.4" fill="url(#gPanel)" />
<rect x="1277.0" y="524.7" width="60.2" height="26.1" fill="#2f2e2a" />
<rect x="1343.2" y="479.7" width="4.0" height="45.0" fill="#d4d6d8" />
<rect x="1357.6" y="377.9" width="85.9" height="51.0" fill="#15171b" />
<polyline points="1416.3,384.9 1440.0,412.5" fill="none" stroke="#22252b" stroke-width="2" stroke-linecap="round" stroke-linejoin="round" />
<rect x="1451.2" y="372.0" width="26.3" height="25.7" fill="#f6f6f6" stroke="#cfcfcf" stroke-width=".6"/>
<rect x="1456.7" y="373.0" width="15.8" height="8.9" fill="#e8b4a6" />
<rect x="1457.7" y="383.9" width="13.8" height="4.9" fill="#e9d0c8" />
<rect x="1483.8" y="372.0" width="15.4" height="21.1" fill="#c9a24a" />
<rect x="1485.8" y="373.0" width="11.5" height="17.8" fill="#25282d" />
<rect x="1465.6" y="404.6" width="25.7" height="33.2" fill="#f7f7f7" stroke="#d5d5d5" stroke-width=".6"/>
<rect x="1469.2" y="408.9" width="4.3" height="4.1" fill="#d93a3a" />
<rect x="1474.3" y="408.9" width="4.3" height="4.1" fill="#e8743a" />
<rect x="1479.5" y="408.9" width="4.3" height="4.1" fill="#e8a53a" />
<rect x="1484.6" y="408.9" width="4.3" height="4.1" fill="#ecc94a" />
<rect x="1469.2" y="413.9" width="4.3" height="4.1" fill="#c94a7a" />
<rect x="1474.3" y="413.9" width="4.3" height="4.1" fill="#7a6ab8" />
<rect x="1479.5" y="413.9" width="4.3" height="4.1" fill="#5a86c8" />
<rect x="1484.6" y="413.9" width="4.3" height="4.1" fill="#e8a53a" />
<rect x="1469.2" y="418.8" width="4.3" height="4.1" fill="#d93a5a" />
<rect x="1474.3" y="418.8" width="4.3" height="4.1" fill="#5a86c8" />
<rect x="1479.5" y="418.8" width="4.3" height="4.1" fill="#8a9ad0" />
<rect x="1484.6" y="418.8" width="4.3" height="4.1" fill="#ecc94a" />
<rect x="1469.2" y="423.8" width="4.3" height="4.1" fill="#c9304a" />
<rect x="1474.3" y="423.8" width="4.3" height="4.1" fill="#d93a3a" />
<rect x="1479.5" y="423.8" width="4.3" height="4.1" fill="#a0b0d8" />
<rect x="1484.6" y="423.8" width="4.3" height="4.1" fill="#e0e0e0" />
<rect x="1508.1" y="374.6" width="40.5" height="2.4" fill="#f4f4f4" />
<rect x="1505.1" y="402.6" width="38.5" height="2.6" fill="#f3f3f1" />
<rect x="1504.2" y="430.3" width="38.5" height="2.6" fill="#f3f3f1" />
<polyline points="1507.1,405.6 1505.1,420.4" fill="none" stroke="#dcc777" stroke-width="1.2" stroke-linecap="round" stroke-linejoin="round" />
<polyline points="1536.7,405.6 1534.8,420.4" fill="none" stroke="#dcc777" stroke-width="1.2" stroke-linecap="round" stroke-linejoin="round" />
<polyline points="1506.1,433.2 1505.1,445.1" fill="none" stroke="#dcc777" stroke-width="1.2" stroke-linecap="round" stroke-linejoin="round" />
<polyline points="1535.8,433.2 1532.8,446.1" fill="none" stroke="#dcc777" stroke-width="1.2" stroke-linecap="round" stroke-linejoin="round" />
<rect x="1518.0" y="380.5" width="2.4" height="22.1" fill="#efefef" />
<rect x="1520.9" y="380.5" width="2.4" height="22.1" fill="#c8382e" />
<rect x="1523.5" y="381.1" width="2.4" height="21.5" fill="#f2f2f2" />
<rect x="1526.1" y="381.7" width="2.4" height="20.9" fill="#e8e8e8" />
<rect x="1528.4" y="381.7" width="2.4" height="20.9" fill="#b8322a" />
<rect x="1530.8" y="381.7" width="2.4" height="20.9" fill="#f4f4f4" />
<rect x="1533.4" y="380.5" width="2.4" height="22.1" fill="#2f6fb5" />
<rect x="1535.9" y="381.1" width="2.4" height="21.5" fill="#2aa0b8" />
<rect x="1538.3" y="381.1" width="2.4" height="21.5" fill="#f0f0f0" />
<rect x="1540.7" y="381.1" width="2.4" height="21.5" fill="#d8d8d8" />
<ellipse cx="1512.6" cy="393.7" rx="4.7" ry="8.9" fill="#77736c" transform="rotate(0 1512.6 393.7)" />
<ellipse cx="1512.6" cy="396.7" rx="3.0" ry="4.3" fill="#e6e2da" transform="rotate(0 1512.6 396.7)" />
<rect x="1511.1" y="424.7" width="4.3" height="5.5" fill="#5a4a3a" />
<rect x="1518.0" y="424.7" width="4.3" height="5.5" fill="#3a3a3a" />
<rect x="1523.9" y="424.7" width="4.3" height="5.5" fill="#6a4a2a" />
<rect x="1532.8" y="424.7" width="4.3" height="5.5" fill="#c9a03a" />
<rect x="1539.7" y="424.7" width="4.3" height="5.5" fill="#b33" />
<rect x="1555.5" y="372.0" width="39.5" height="62.6" fill="#1b2130" />
<polygon points="1541.7,433.2 1595.0,438.2 1595.0,480.6 1541.7,465.8" fill="#0d0e11" />
<rect x="1562.4" y="465.8" width="7.9" height="9.9" fill="#111" />
<polygon points="1495.3,467.8 1542.7,465.8 1542.7,550.8 1495.3,550.8" fill="#dfe2e5" />
<polygon points="1495.3,468.8 1541.7,465.8 1595.0,480.6 1595.0,550.8 1586.1,550.8 1540.7,503.4 1511.1,483.6 1495.3,472.7" fill="#23252a" />
<polygon points="1513.0,480.6 1534.8,478.7 1541.7,488.5 1520.9,491.5" fill="#cfd0d2" />
<polygon points="1524.9,471.8 1546.6,469.8 1550.6,473.7 1528.8,475.7" fill="#3a3a3c" />
<polygon points="1534.8,486.6 1562.4,483.6 1568.3,491.5 1540.7,495.5" fill="#2d2f33" />
<ellipse cx="1558.5" cy="483.6" rx="8.9" ry="2.8" fill="#7a5a30" transform="rotate(8 1558.5 483.6)" />
<polygon points="1553.5,507.3 1586.1,505.3 1595.0,515.2 1595.0,523.1 1568.3,526.1" fill="#f4f4f4" />
<polygon points="1580.2,531.0 1595.0,529.0 1595.0,542.9 1590.1,544.8" fill="#e9e9e9" />
<ellipse cx="1505.1" cy="466.8" rx="4.3" ry="2.0" fill="#222" transform="rotate(0 1505.1 466.8)" />
<ellipse cx="1520.0" cy="466.8" rx="4.3" ry="2.0" fill="#333" transform="rotate(0 1520.0 466.8)" />
<polygon points="1501.2,471.8 1509.1,472.7 1518.0,483.6 1526.9,507.3 1558.5,522.1 1564.4,550.8 1524.9,550.8 1511.1,511.3 1503.2,491.5" fill="#141517" />
<polygon points="1334.3,550.8 1335.3,523.1 1339.6,499.4 1353.1,480.6 1372.8,467.8 1380.7,456.0 1385.6,483.6 1389.6,496.4 1408.4,509.3 1414.3,511.3 1434.0,491.5 1436.0,452.0 1443.9,459.9 1455.8,465.8 1481.4,475.7 1497.2,499.4 1512.1,527.1 1527.9,550.8" fill="url(#gJ)" />
<polyline points="1343.2,499.4 1361.0,493.5 1380.7,499.4 1396.5,511.3" fill="none" stroke="#c98e12" stroke-width="1.6" stroke-linecap="round" stroke-linejoin="round" opacity=".75"/>
<polyline points="1337.3,519.2 1361.0,511.3 1388.6,519.2 1406.4,529.0" fill="none" stroke="#c98e12" stroke-width="1.6" stroke-linecap="round" stroke-linejoin="round" opacity=".75"/>
<polyline points="1337.3,538.9 1364.9,531.0 1396.5,538.9 1408.4,546.8" fill="none" stroke="#c98e12" stroke-width="1.6" stroke-linecap="round" stroke-linejoin="round" opacity=".75"/>
<polyline points="1420.2,511.3 1443.9,499.4 1471.6,499.4 1495.3,507.3" fill="none" stroke="#c98e12" stroke-width="1.6" stroke-linecap="round" stroke-linejoin="round" opacity=".75"/>
<polyline points="1416.3,529.0 1447.9,517.2 1483.4,519.2 1507.1,529.0" fill="none" stroke="#c98e12" stroke-width="1.6" stroke-linecap="round" stroke-linejoin="round" opacity=".75"/>
<polyline points="1416.3,546.8 1451.8,535.0 1491.3,536.9 1519.0,546.8" fill="none" stroke="#c98e12" stroke-width="1.6" stroke-linecap="round" stroke-linejoin="round" opacity=".75"/>
<polyline points="1408.4,509.3 1409.3,531.0 1409.9,550.8" fill="none" stroke="#b98210" stroke-width="1.4" stroke-linecap="round" stroke-linejoin="round" />
<polygon points="1372.8,467.8 1380.7,456.0 1385.6,483.6 1378.7,483.6" fill="#f7c838" />
<polygon points="1436.0,452.0 1443.9,459.9 1447.9,475.7 1434.0,491.5" fill="#f7c838" />
<polygon points="1383.7,479.7 1396.5,494.5 1414.3,495.5 1431.1,480.6 1434.4,491.5 1414.3,511.7 1408.4,509.7 1388.6,495.9" fill="#1a1a1c" />
<polygon points="1374.4,432.3 1380.7,418.4 1396.5,412.5 1416.3,410.5 1430.5,416.5 1434.4,432.3 1436.0,452.0 1432.5,471.8 1424.2,487.6 1408.4,493.9 1392.6,488.0 1382.7,471.8 1376.4,452.0" fill="#d2a18b" />
<ellipse cx="1404.4" cy="432.3" rx="17.8" ry="11.9" fill="#dbae98" transform="rotate(0 1404.4 432.3)" />
<ellipse cx="1404.4" cy="457.9" rx="7.9" ry="8.9" fill="#dcae99" transform="rotate(0 1404.4 457.9)" />
<polygon points="1379.1,456.0 1384.7,465.8 1392.6,468.6 1400.5,465.4 1408.8,467.4 1420.2,465.8 1430.1,459.9 1435.2,451.0 1434.4,471.8 1426.5,487.6 1413.1,494.7 1404.4,495.9 1396.1,491.9 1385.6,480.1 1380.3,467.8" fill="#5a4540" />
<polygon points="1380.7,465.8 1385.6,475.7 1396.5,488.5 1404.4,492.5 1414.3,491.5 1426.1,483.6 1433.6,469.8 1434.4,475.7 1426.5,488.5 1413.1,495.5 1404.4,496.6 1396.1,492.7 1385.6,480.8 1380.3,469.8" fill="#2c2222" />
<polygon points="1393.5,467.8 1400.5,465.4 1408.8,467.4 1416.7,466.2 1414.7,471.8 1404.4,474.5 1396.1,471.8" fill="#a27a6e" />
<polygon points="1394.5,465.4 1404.4,463.5 1416.3,465.0 1414.3,468.2 1404.4,467.0 1396.1,468.6" fill="#4a3632" />
<ellipse cx="1404.8" cy="471.4" rx="7.5" ry="2.0" fill="#5a2f30" transform="rotate(0 1404.8 471.4)" />
<polygon points="1398.9,477.7 1411.5,477.7 1409.9,491.5 1404.4,495.9 1400.5,491.5" fill="#1e1718" />
<polygon points="1371.2,439.2 1367.9,412.5 1372.8,394.7 1388.6,382.9 1412.3,380.5 1428.5,388.8 1438.4,408.6 1440.4,430.7 1435.2,433.2 1430.5,416.8 1416.3,410.9 1396.5,412.9 1380.7,418.8 1375.2,432.3" fill="#2a2321" />
<g fill="#e3c6b6" fill-opacity=".45" stroke="#141414" stroke-width="1.9" stroke-linejoin="round"><polygon points="1371.6,436.6 1397.7,435.8 1398.9,446.5 1394.5,448.8 1376.8,448.8 1372.4,446.1" fill="inherit" /><polygon points="1402.4,436.2 1433.2,435.4 1432.8,445.3 1428.5,448.8 1408.4,448.8 1403.2,446.1" fill="inherit" /></g>
<polyline points="1370.8,435.8 1434.0,434.6" fill="none" stroke="#141414" stroke-width="2.6" stroke-linecap="round" stroke-linejoin="round" />
<polyline points="1433.2,435.4 1438.4,432.3" fill="none" stroke="#141414" stroke-width="1.6" stroke-linecap="round" stroke-linejoin="round" />
<polyline points="1380.7,442.5 1393.5,442.1" fill="none" stroke="#3a2a26" stroke-width="1.6" stroke-linecap="round" stroke-linejoin="round" />
<polyline points="1408.4,442.1 1424.2,441.3" fill="none" stroke="#3a2a26" stroke-width="1.6" stroke-linecap="round" stroke-linejoin="round" />
<ellipse cx="1398.5" cy="546.8" rx="22.1" ry="8.7" fill="#14171b" transform="rotate(0 1398.5 546.8)" />
</g></svg>
<div class="abs" id="leave"></div>
<svg class="a" style="left:0;top:0" width="1600" height="900" viewBox="0 0 1600 900">
<rect x="3.2" y="4" width="14" height="14" rx="4" fill="#4a8cff"/><rect x="5.8" y="8.6" width="6" height="4.8" rx="1.2" fill="#fff"/><path d="M12.3 10.4 L14.6 8.8 V13.2 L12.3 11.6Z" fill="#fff"/>
<path d="M1479 10.5 H1489" stroke="#000" stroke-width="1" shape-rendering="crispEdges"/>
<g shape-rendering="crispEdges" fill="none" stroke="#000" stroke-width="1"><rect x="1524.5" y="7.5" width="7" height="7"/><path d="M1526.5 7.5 V5.5 H1533.5 V12.5 H1531.5"/></g>
<path d="M1570 5 L1580 15 M1580 5 L1570 15" stroke="#000" stroke-width="1.1"/>
<path d="M960.3 9.8 L963.3 12.8 L966.3 9.8" fill="none" stroke="#fff" stroke-width="1.4"/>
<rect x="8" y="31" width="23.5" height="23.5" rx="5" fill="#232323"/>
<path d="M20.1 36.5 L26.2 38.6 V43 C26.2 46.6 23.6 49.2 20.1 50.4 C16.6 49.2 14 46.6 14 43 V38.6Z" fill="#23d959"/><path d="M17.2 43.3 L19.3 45.4 L23.2 41.3" fill="none" stroke="#1a1a1a" stroke-width="1.5"/>
<defs><radialGradient id="rg"><stop offset="0" stop-color="#ff8a80"/><stop offset=".55" stop-color="#f0524d"/><stop offset=".75" stop-color="#c0392b" stop-opacity=".55"/><stop offset="1" stop-color="#7a1d18" stop-opacity="0"/></radialGradient></defs><circle cx="52" cy="43.2" r="8" fill="url(#rg)"/>
<rect x="1537" y="31.2" width="55" height="25.7" rx="6" fill="#232323"/>
<rect x="1543.6" y="41.2" width="10.8" height="6.9" fill="#d5d5d5"/><rect x="1543.6" y="38" width="3" height="2.6" fill="#d5d5d5"/><rect x="1547.5" y="38" width="3" height="2.6" fill="#d5d5d5"/><rect x="1551.4" y="38" width="3" height="2.6" fill="#d5d5d5"/>
<rect x="42.2" y="853.3" width="7.4" height="13.5" rx="3.7" fill="#b4b4b4"/><path d="M39.6 863 C39.6 867 42.5 869.3 45.9 869.3 C49.3 869.3 52.2 867 52.2 863" fill="none" stroke="#b4b4b4" stroke-width="1.4"/><path d="M45.9 869.3 V873.6 M42.4 874.2 H49.4" stroke="#b4b4b4" stroke-width="1.5"/><path d="M34.6 875.4 L57.4 852.5" stroke="#e8505b" stroke-width="1.5"/>
<path d="M74.2 866.1 L78.0 861.9 L81.8 866.1" fill="none" stroke="#cfcfcf" stroke-width="1.4"/>
<path d="M172 866.1 L175.8 861.9 L179.6 866.1" fill="none" stroke="#cfcfcf" stroke-width="1.4"/>
<path d="M724.4 866.1 L728.1999999999999 861.9 L732.0 866.1" fill="none" stroke="#cfcfcf" stroke-width="1.4"/>
<rect x="126.7" y="856.8" width="17.3" height="14.3" rx="3.4" fill="#b4b4b4"/><path d="M145 862.3 L150.9 858 V870 L145 865.7Z" fill="#b4b4b4"/>
<circle cx="670" cy="860.6" r="4.3" fill="#b4b4b4"/><path d="M662.6 873.4 V871 C662.6 868 666 866.4 670 866.4 C674 866.4 677.4 868 677.4 871 V873.4Z" fill="#b4b4b4"/><circle cx="680.5" cy="861.2" r="3.6" fill="#b4b4b4"/><path d="M678.8 866.6 C683.5 866 687.4 867.8 687.4 870.6 V873.4 H679.2 V871 C679.2 869 679.2 867.6 678.8 866.6Z" fill="#b4b4b4"/>
<path d="M773.5 856 H786.5 Q790 856 790 859.5 V866 Q790 869.5 786.5 869.5 H779.5 L775.3 874.6 V869.5 H773.5 Q770 869.5 770 866 V859.5 Q770 856 773.5 856Z" fill="#b4b4b4"/>
<rect x="856.6" y="855" width="24.4" height="17.6" rx="3.5" fill="#23d959"/><path d="M868.8 868.4 V860 M865.2 863.2 L868.8 859.6 L872.4 863.2" fill="none" stroke="#1a1a1a" stroke-width="1.8"/>
<circle cx="958" cy="863.7" r="9.6" fill="none" stroke="#b4b4b4" stroke-width="1.5"/><circle cx="958" cy="863.7" r="6.7" fill="#b4b4b4"/>
<circle cx="1037.6" cy="865" r="9.2" fill="#b4b4b4"/><circle cx="1034.4" cy="862.8" r="1.2" fill="#1a1a1a"/><circle cx="1040.6" cy="862.8" r="1.2" fill="#1a1a1a"/><path d="M1033 866.6 Q1037.6 871.8 1042.2 866.6Z" fill="#1a1a1a"/><circle cx="1045.8" cy="856.4" r="4.6" fill="#1a1a1a"/><path d="M1045.8 853 V859.6 M1042.5 856.3 H1049.1" stroke="#b4b4b4" stroke-width="1.3"/>
<path d="M1270.6 448 V473 M1273 448 V473" stroke="#a8a8a8" stroke-width="0.9"/>
<rect x="1278" y="530.6" width="98.8" height="19.4" fill="#1f2226" fill-opacity=".82"/>
<path d="M1281.3 545.8 V541.8 M1285 545.8 V539.4 M1288.8 545.8 V536.8 M1292.6 545.8 V534.4" stroke="#fff" stroke-width="2.3"/>
</svg>
<svg class="a" style="left:0;top:0" width="1600" height="900" viewBox="0 0 1600 900">
<path d="M24.9 111.5 C25.6 111.4 26.6 110.7 26.7 109.3 C25.6 109.4 24.6 110.4 24.9 111.5Z M20.3 115.6 C20.3 113.4 21.9 112 23.3 112 C24 112 24.6 112.4 25 112.4 C25.4 112.4 26.2 111.9 27.1 112 C27.9 112 28.8 112.5 29.3 113.3 C27.7 114.3 28 116.6 29.6 117.2 C29.1 118.5 28.1 119.6 27.3 119.6 C26.6 119.6 26.3 119.2 25.4 119.2 C24.5 119.2 24.2 119.6 23.5 119.6 C22.2 119.6 20.3 117.6 20.3 115.6Z" fill="#f2f2f2"/>
<rect x="969.6" y="110.8" width="10.8" height="7.2" fill="#f2f2f2"/><path d="M972 118 L970.6 120 H979.4 L978 118Z" fill="#f2f2f2"/><rect x="971" y="112" width="8" height="4.4" fill="#8a8a8c"/>
<rect x="993.5" y="110.6" width="11" height="7.6" rx="1" fill="none" stroke="#f2f2f2" stroke-width="1.1"/><path d="M996 112.8 H1002 M996 115.8 H1002" stroke="#f2f2f2" stroke-width="1"/>
<circle cx="1024.7" cy="114.6" r="6.2" fill="#f2f2f2"/><path d="M1023.4 111.8 L1026.4 114.6 L1023.4 117.4" fill="none" stroke="#1e1e20" stroke-width="1.5"/>
<circle cx="1047" cy="115" r="3.9" fill="none" stroke="#f2f2f2" stroke-width="0.9"/><path d="M1046 113.2 L1048.8 115 L1046 116.8Z" fill="#f2f2f2"/>
<rect x="1065.2" y="110.4" width="10.8" height="7" fill="#e9e4e6"/><rect x="1065.2" y="110.4" width="4.6" height="3.6" fill="#4757a6"/><path d="M1069.8 111 H1076 M1069.8 112.6 H1076 M1065.2 114.4 H1076 M1065.2 116 H1076" stroke="#d0485a" stroke-width="0.9"/><rect x="1069.5" y="117.4" width="5" height="2.4" fill="#ddd"/>
<rect x="1088.8" y="110.8" width="13.6" height="7" rx="1.8" fill="#f2f2f2"/><rect x="1103" y="113" width="1.2" height="2.6" fill="#f2f2f2"/><path d="M1096.6 111.4 L1093.4 114.8 H1095.6 L1094.6 117.4 L1098 113.8 H1095.8Z" fill="#1e1e20"/>
<path d="M1116.6 113 Q1122.5 108 1128.4 113" fill="none" stroke="#f2f2f2" stroke-width="1.5"/><path d="M1118.8 115.3 Q1122.5 112.2 1126.2 115.3" fill="none" stroke="#f2f2f2" stroke-width="1.5"/><circle cx="1122.5" cy="117.7" r="1.3" fill="#f2f2f2"/>
<circle cx="1143.2" cy="113.8" r="2.9" fill="none" stroke="#f2f2f2" stroke-width="1.2"/><path d="M1145.3 116 L1147.6 118.4" stroke="#f2f2f2" stroke-width="1.3"/>
<rect x="1160.4" y="111.3" width="9.6" height="3.6" rx="1.8" fill="none" stroke="#f2f2f2" stroke-width="0.9"/><circle cx="1162.4" cy="113.1" r="1.1" fill="#f2f2f2"/><rect x="1160" y="116" width="10.2" height="3.8" rx="1.9" fill="#f2f2f2"/><circle cx="1168" cy="117.9" r="1" fill="#1e1e20"/>
</svg>
<span class="t sa" style="left:22.2px;top:6px;font-size:12.60px;transform:scaleX(0.991);color:#000;">Zoom Meeting</span>
<span class="t sa" style="left:629.8px;top:5px;font-size:12.00px;transform:scaleX(0.982);color:#2f3a2a;font-weight:700;">You are viewing Rafael Nepô's screen</span>
<span class="t sa" style="left:884.3px;top:5px;font-size:12.00px;transform:scaleX(0.926);color:#fff;font-weight:700;">View Options</span>
<span class="t sa" style="left:63.6px;top:37px;font-size:12.00px;transform:scaleX(0.976);color:#e6e6e6;">Recording</span>
<span class="t sa" style="left:1560.3px;top:38px;font-size:12.40px;transform:scaleX(0.916);color:#e0e0e0;">View</span>
<span class="t sa" style="left:43.2px;top:111px;font-size:8.60px;transform:scaleX(1.061);color:#f0f0f0;font-weight:700;">Pitch</span>
<span class="t sa" style="left:78.7px;top:111px;font-size:8.60px;transform:scaleX(1.053);color:#f0f0f0;">File</span>
<span class="t sa" style="left:106.2px;top:111px;font-size:8.60px;transform:scaleX(1.087);color:#f0f0f0;">Edit</span>
<span class="t sa" style="left:135.3px;top:111px;font-size:8.60px;transform:scaleX(1.050);color:#f0f0f0;">View</span>
<span class="t sa" style="left:167.3px;top:111px;font-size:8.60px;transform:scaleX(1.109);color:#f0f0f0;">Window</span>
<span class="t sa" style="left:213.2px;top:111px;font-size:8.60px;transform:scaleX(1.052);color:#f0f0f0;">Help</span>
<span class="t sa" style="left:1180.3px;top:111px;font-size:8.70px;transform:scaleX(1.060);color:#f0f0f0;">Wed 28 Jul  14:16</span>
<span class="t sa" style="left:23.4px;top:881px;font-size:12.00px;transform:scaleX(1.052);color:#d8d8d8;">Unmute</span>
<span class="t sa" style="left:108.2px;top:881px;font-size:12.00px;transform:scaleX(1.034);color:#d8d8d8;">Stop Video</span>
<span class="t sa" style="left:643.3px;top:881px;font-size:12.00px;transform:scaleX(1.011);color:#d8d8d8;">Participants</span>
<span class="t sa" style="left:691.2px;top:857px;font-size:12.00px;transform:scaleX(0.981);color:#d8d8d8;">27</span>
<span class="t sa" style="left:767.7px;top:881px;font-size:12.00px;transform:scaleX(0.970);color:#d8d8d8;">Chat</span>
<span class="t sa" style="left:833.3px;top:881px;font-size:12.00px;transform:scaleX(0.952);color:#23d959;">Share Screen</span>
<span class="t sa" style="left:938.3px;top:881px;font-size:12.00px;transform:scaleX(0.967);color:#d8d8d8;">Record</span>
<span class="t sa" style="left:1011.8px;top:881px;font-size:12.00px;transform:scaleX(0.963);color:#d8d8d8;">Reactions</span>
<span class="t sa" style="left:1539.3px;top:867px;font-size:12.00px;transform:scaleX(1.026);color:#fff;font-weight:700;">Leave</span>
<span class="t sa" style="left:1300.1px;top:534px;font-size:13.00px;transform:scaleX(1.011);color:#fff;">Rafael Nepô</span>
</body></html>
